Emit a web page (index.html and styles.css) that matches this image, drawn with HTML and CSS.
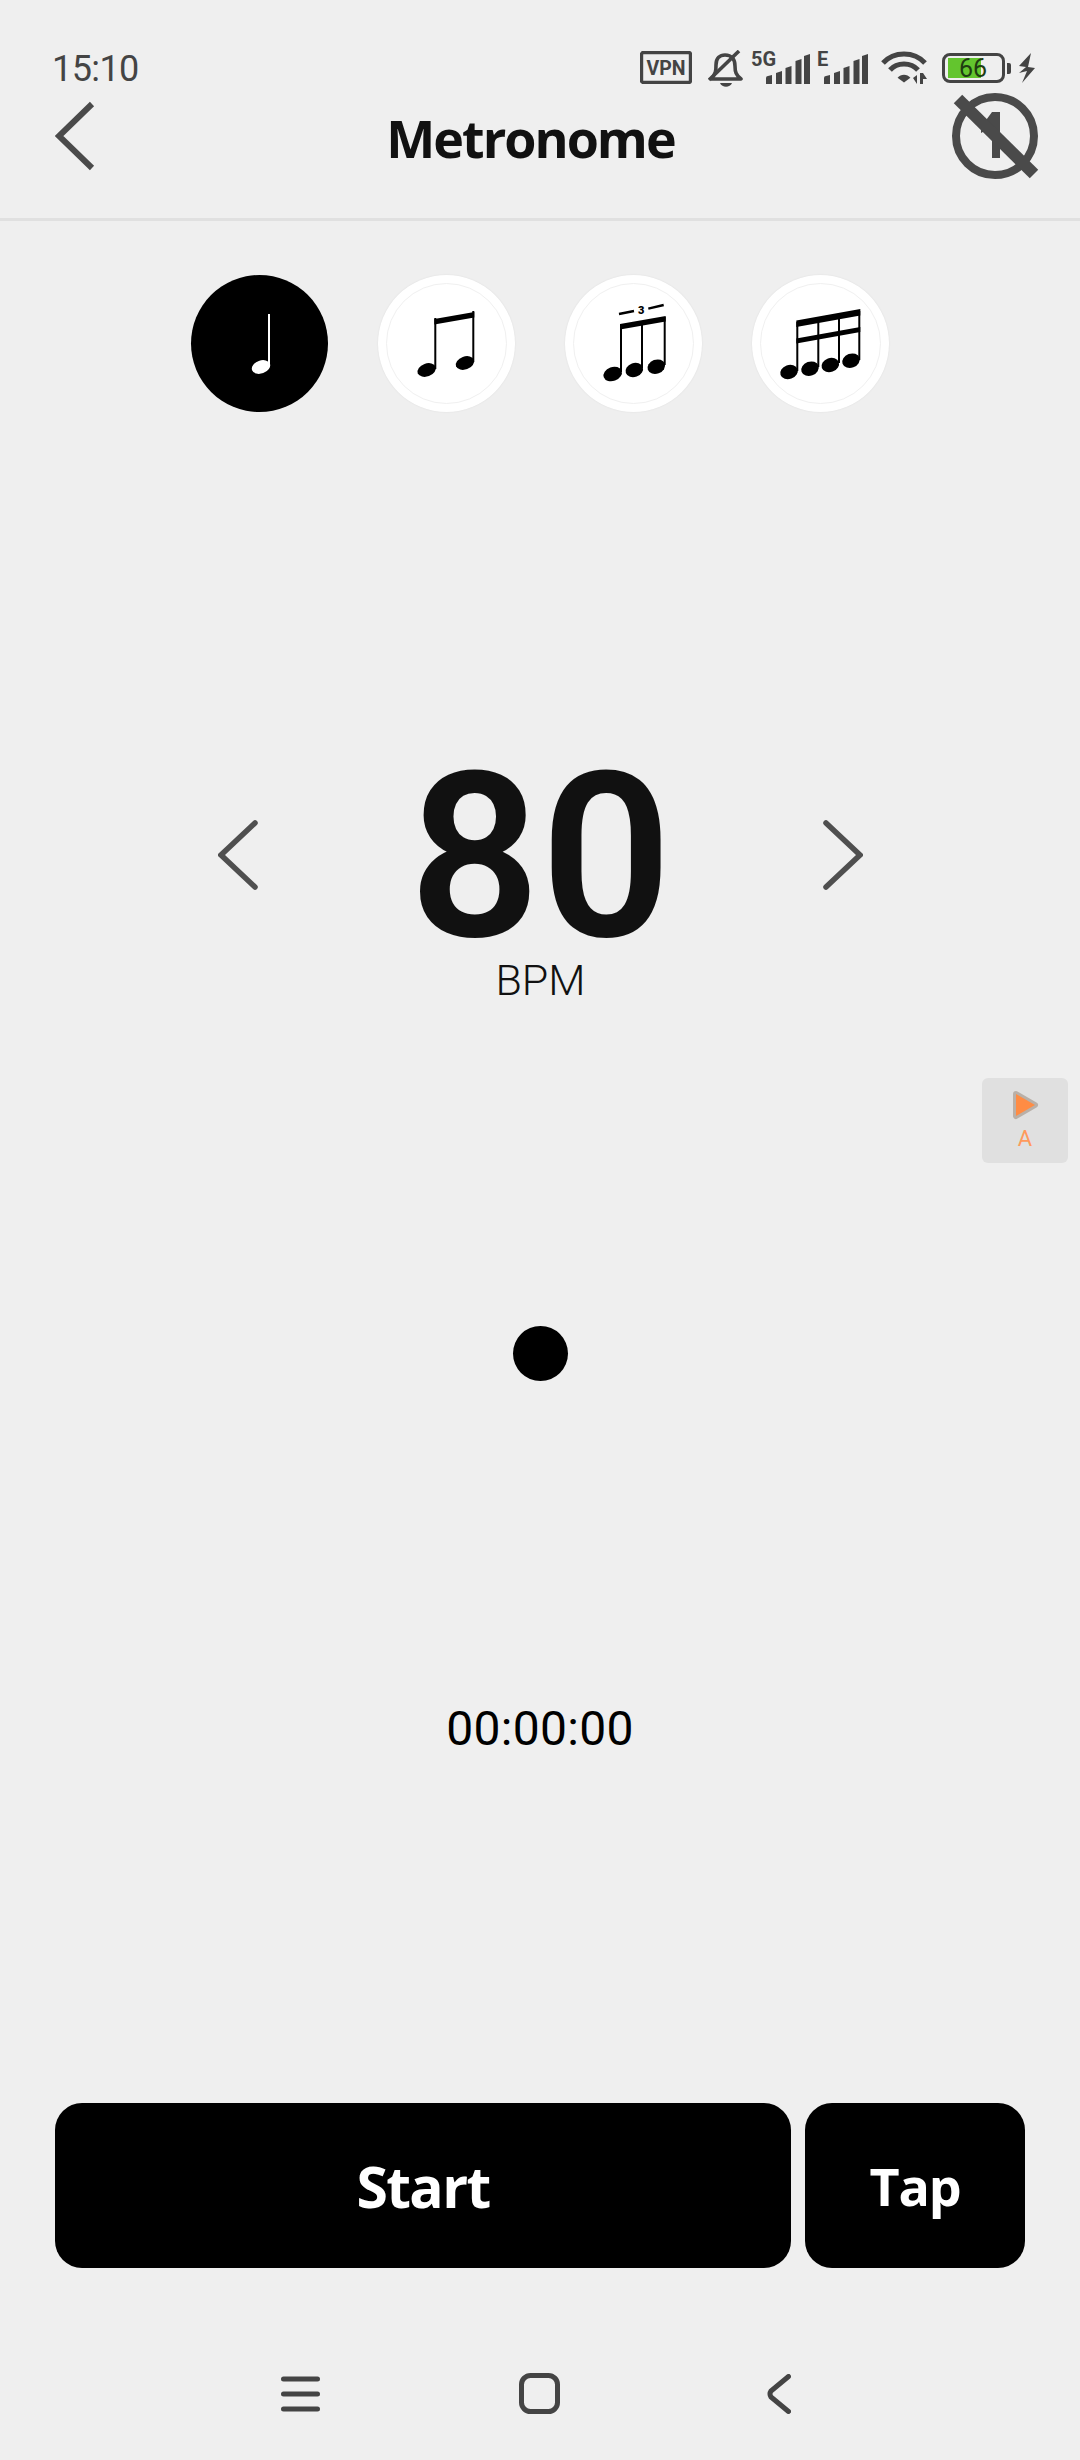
FILE: index.html
```html
<!DOCTYPE html>
<html lang="en">
<head>
  <meta charset="UTF-8">
  <title>Metronome</title>
  <link rel="stylesheet" href="styles.css">
</head>
<body>
  <div class="status">
    <span class="time">15:10</span>
    <div class="status-icons">
      <svg class="ic-vpn" width="52" height="33" viewBox="0 0 52 33">
        <rect x="1.5" y="1.5" width="49" height="30" rx="2" fill="none" stroke="#444" stroke-width="3.4"/>
        <text x="26" y="23.5" text-anchor="middle" class="st-text" font-size="19.5">VPN</text>
      </svg>
      <svg class="ic-bell" width="35" height="38" viewBox="0 0 35 38">
        <path d="M3 29 C8 24 8 20 8 15 C8 8 12 5 17 5 C24 5 27 10 27 16 C27 22 28 25 33 29 L3 29" fill="none" stroke="#444" stroke-width="3.6" stroke-linejoin="round"/>
        <path d="M1 30 L31 1" stroke="#444" stroke-width="3.6"/>
        <path d="M12 33 H24 C22 38 14 38 12 33 Z" fill="#444"/>
      </svg>
      <svg class="ic-signal" width="59" height="37" viewBox="0 -4 59 37">
        <text x="0" y="15" class="st-text" font-size="20">5G</text>
        <path d="M15 33 V27 Q15 25 17 25 L21 24 V33 Z M25 33 V22 L31 20 V33 Z M34.5 33 V17 L40.5 15 V33 Z M44.5 33 V10 L50.5 8 V33 Z M53 33 V5 L59 3 V33 Z" fill="#444"/>
      </svg>
      <svg class="ic-signal-e" width="51" height="37" viewBox="0 -4 51 37">
        <text x="0" y="15" class="st-text" font-size="20">E</text>
        <path d="M7 33 V27 Q7 25 9 25 L13 24 V33 Z M17 33 V22 L23 20 V33 Z M26.5 33 V17 L32.5 15 V33 Z M36.5 33 V10 L42.5 8 V33 Z M45 33 V5 L51 3 V33 Z" fill="#444"/>
      </svg>
      <svg class="ic-wifi" width="46" height="33" viewBox="0 0 46 33">
        <path d="M2 12 C13 0 33 0 44 12" fill="none" stroke="#444" stroke-width="5"/>
        <path d="M9 19 C16 11 30 11 37 19" fill="none" stroke="#444" stroke-width="5"/>
        <path d="M15 26 L23 32 L31 26 C27 21 19 21 15 26 Z" fill="#444" transform="translate(4.6 6) scale(.8)"/>
        <path d="M32 27 L36 24 V33 Z M39 22 H42 V33 H39 Z M42 22 L46 28 H42 Z" fill="#444"/>
      </svg>
      <div class="battery">
        <div class="battery-body">
          <div class="battery-fill"></div>
          <span class="battery-num">66</span>
        </div>
        <div class="battery-tip"></div>
      </div>
      <svg class="ic-bolt" width="18" height="30" viewBox="0 0 18 30">
        <path d="M13 0 L1 13 L8 14 L1 20 L9 18 L4 30 L17 15 L10 14 Z" fill="#444"/>
      </svg>
    </div>
  </div>

  <header class="topbar">
    <svg class="back" width="40" height="70" viewBox="0 0 40 70">
      <path d="M37 3 L4 35 L37 67" fill="none" stroke="#4a4a4a" stroke-width="6"/>
    </svg>
    <h1 class="title">Metronome</h1>
    <svg class="mute-one" width="90" height="90" viewBox="0 0 90 90">
      <circle cx="45" cy="45" r="39" fill="none" stroke="#4a4a4a" stroke-width="8"/>
      <path d="M42 21 H50 V67 H42 V36 L31 42 V36 Z" fill="#4a4a4a"/>
      <path d="M8 8 L84 83" stroke="#4a4a4a" stroke-width="12"/>
    </svg>
  </header>

  <div class="rhythm">
    <button class="note-btn active">
      <svg width="137" height="137" viewBox="0 0 137 137">
        <ellipse cx="70" cy="92" rx="9.5" ry="6.5" transform="rotate(-20 70 92)" fill="#fff"/>
        <path d="M78 39 V90" stroke="#fff" stroke-width="2"/>
      </svg>
    </button>
    <button class="note-btn">
      <svg width="137" height="137" viewBox="0 0 137 137">
        <ellipse cx="48.7" cy="95" rx="9.5" ry="6.5" transform="rotate(-20 48.7 95)"/>
        <ellipse cx="87" cy="88" rx="9.5" ry="6.5" transform="rotate(-20 87 88)"/>
        <path d="M57.3 43 V94 M95.3 36 V87" stroke="#000" stroke-width="2"/>
        <path d="M56.3 44 L96.3 37 V42.5 L56.3 49.5 Z"/>
      </svg>
    </button>
    <button class="note-btn">
      <svg width="137" height="137" viewBox="0 0 137 137">
        <ellipse cx="47.7" cy="99" rx="9.5" ry="7" transform="rotate(-20 47.7 99)"/>
        <ellipse cx="69.3" cy="95" rx="9" ry="7" transform="rotate(-20 69.3 95)"/>
        <ellipse cx="91.3" cy="91.7" rx="9" ry="7" transform="rotate(-20 91.3 91.7)"/>
        <path d="M56 50 V97 M77 46 V93 M99.7 42 V90" stroke="#000" stroke-width="2"/>
        <path d="M55 49 L100.7 41 V46.5 L55 54.5 Z"/>
        <path d="M54 39 L69 36 M83.3 33.7 L98.7 30" stroke="#000" stroke-width="2.4"/>
        <text x="76.3" y="39" text-anchor="middle" class="triplet">3</text>
      </svg>
    </button>
    <button class="note-btn">
      <svg width="137" height="137" viewBox="0 0 137 137">
        <ellipse cx="37" cy="97" rx="9" ry="7" transform="rotate(-20 37 97)"/>
        <ellipse cx="58" cy="93.7" rx="9" ry="7" transform="rotate(-20 58 93.7)"/>
        <ellipse cx="78.3" cy="90" rx="9" ry="7" transform="rotate(-20 78.3 90)"/>
        <ellipse cx="99" cy="85.7" rx="9" ry="7" transform="rotate(-20 99 85.7)"/>
        <path d="M45.3 47 V96 M66.3 43 V92 M87 40 V88 M107.3 36 V85" stroke="#000" stroke-width="2"/>
        <path d="M44.3 45.5 L108.3 34 V40.5 L44.3 52 Z"/>
        <path d="M44.3 63.5 L108.3 52 V57 L44.3 68.5 Z"/>
      </svg>
    </button>
  </div>

  <section class="tempo">
    <svg class="tempo-arrow" width="40" height="70" viewBox="0 0 40 70">
      <path d="M37 3 L3 35 L37 67" fill="none" stroke="#4f4f4f" stroke-width="5.5" stroke-linecap="round"/>
    </svg>
    <div class="tempo-value">
      <div class="bpm">80</div>
      <div class="bpm-unit">BPM</div>
    </div>
    <svg class="tempo-arrow" width="40" height="70" viewBox="0 0 40 70">
      <path d="M3 3 L37 35 L3 67" fill="none" stroke="#4f4f4f" stroke-width="5.5" stroke-linecap="round"/>
    </svg>
  </section>

  <div class="beat-dot"></div>
  <div class="timer">00:00:00</div>

  <div class="actions">
    <button class="btn btn-start">Start</button>
    <button class="btn btn-tap">Tap</button>
  </div>

  <nav class="navbar">
    <svg width="39" height="36" viewBox="0 0 39 36">
      <path d="M2.5 3 H36.5 M2.5 18 H36.5 M2.5 33 H36.5" stroke="#444" stroke-width="5" stroke-linecap="round"/>
    </svg>
    <svg width="41" height="41" viewBox="0 0 41 41">
      <rect x="2.5" y="2.5" width="36" height="36" rx="9" fill="none" stroke="#444" stroke-width="5"/>
    </svg>
    <svg class="nav-back" width="24" height="40" viewBox="0 0 24 40">
      <path d="M21.5 2.5 L4 17 Q2 20 4 23 L21.5 37.5" fill="none" stroke="#444" stroke-width="5" stroke-linecap="round"/>
    </svg>
  </nav>

  <div class="float-tool">
    <svg width="28" height="32" viewBox="0 0 28 32">
      <path d="M5 5 L24 16 L5 27 Z" fill="#ff8c44" stroke="#b9b0a8" stroke-width="6" stroke-linejoin="round" paint-order="stroke"/>
    </svg>
    <span class="float-label">A</span>
  </div>
</body>
</html>
```

FILE: styles.css
```css
body {
  position: relative;
  width: 1080px;
  height: 2460px;
  margin: 0;
  overflow: hidden;
  background: #efefef;
  font-family: Roboto, sans-serif;
  color: #111;
}
button {
  border: 0;
  padding: 0;
  font-family: inherit;
}
svg {
  display: block;
}

.status {
  display: flex;
  justify-content: space-between;
  height: 92px;
  box-sizing: border-box;
  padding: 50px 44px 0 52px;
}
.time {
  font-size: 36px;
  line-height: 38px;
  letter-spacing: -0.6px;
  color: #444;
}
.status-icons {
  display: flex;
  align-items: flex-start;
  height: 38px;
  margin-top: 1px;
}
.st-text {
  font-family: Roboto, sans-serif;
  font-weight: 700;
  fill: #444;
}
.ic-bell { margin-left: 16px; margin-top: -1px; }
.ic-signal { margin-left: 8px; margin-top: -4px; }
.ic-signal-e { margin-left: 7px; margin-top: -4px; }
.ic-wifi { margin-left: 13px; }
.battery {
  display: flex;
  align-items: center;
  margin-left: 15px;
  margin-top: 2px;
}
.battery-body {
  position: relative;
  box-sizing: border-box;
  width: 63px;
  height: 30px;
  border: 3px solid #444;
  border-radius: 8px;
}
.battery-fill {
  width: 33px;
  height: 20px;
  margin: 2px 0 0 3px;
  background: #63c52e;
}
.battery-num {
  position: absolute;
  top: 0;
  left: 14px;
  font-size: 25px;
  line-height: 25px;
  color: #1f3d12;
}
.battery-tip {
  width: 4px;
  height: 11px;
  margin-left: 2px;
  border-radius: 0 2px 2px 0;
  background: #444;
}
.ic-bolt { margin-left: 7px; margin-top: 2px; }

.topbar {
  display: flex;
  align-items: center;
  height: 126px;
  padding: 0 40px 0 55px;
  border-bottom: 3px solid #e0e0e0;
}
.back {
  margin-top: -38px;
}
.title {
  flex: 1;
  margin: -36px 0 0;
  padding-left: 16px;
  font-family: "Open Sans", sans-serif;
  font-size: 52px;
  font-weight: 700;
  letter-spacing: -2px;
  text-align: center;
  color: #111;
}
.mute-one {
  margin-top: -38px;
}

.rhythm {
  display: flex;
  justify-content: center;
  gap: 50px;
  margin-top: 54px;
}
.note-btn {
  position: relative;
  width: 137px;
  height: 137px;
  border-radius: 50%;
  background: #fff;
  box-shadow: 0 0 2px rgba(0, 0, 0, 0.08);
}
.note-btn::after {
  content: "";
  position: absolute;
  inset: 8px;
  border: 1px solid #f0f0f0;
  border-radius: 50%;
}
.note-btn.active {
  background: #000;
  box-shadow: none;
}
.note-btn.active::after {
  display: none;
}
.triplet {
  font-family: Roboto, sans-serif;
  font-size: 11px;
  font-weight: 900;
}

.tempo {
  display: flex;
  justify-content: space-between;
  align-items: flex-start;
  width: 645px;
  margin: 356px 0 0 218px;
}
.tempo-arrow {
  margin-top: 52px;
}
.tempo-value {
  text-align: center;
}
.bpm {
  font-size: 230px;
  font-weight: 600;
  line-height: 180px;
  color: #111;
}
.bpm-unit {
  margin-top: 9px;
  font-size: 43px;
  font-weight: 300;
  line-height: 46px;
  color: #111;
}

.beat-dot {
  width: 55px;
  height: 55px;
  margin: 323px auto 0;
  border-radius: 50%;
  background: #000;
}
.timer {
  margin-top: 321px;
  font-size: 48px;
  line-height: 54px;
  letter-spacing: 0.3px;
  text-align: center;
  color: #000;
}

.actions {
  display: flex;
  gap: 14px;
  margin: 347px 55px 0;
}
.btn {
  height: 165px;
  border-radius: 27px;
  background: #000;
  color: #fff;
  font-family: "Open Sans", sans-serif;
  font-weight: 700;
  font-size: 57px;
  letter-spacing: -1.6px;
}
.btn-start {
  flex: 1;
}
.btn-tap {
  width: 220px;
  font-size: 52px;
  letter-spacing: -1.2px;
}

.navbar {
  display: flex;
  align-items: center;
  gap: 199px;
  margin: 105px 0 0 281px;
}
.nav-back {
  margin-left: 8px;
}

.float-tool {
  position: absolute;
  top: 1078px;
  left: 982px;
  display: flex;
  flex-direction: column;
  align-items: center;
  box-sizing: border-box;
  width: 86px;
  height: 85px;
  padding-top: 11px;
  border-radius: 6px;
  background: #e0e0e0;
}
.float-label {
  margin-top: 6px;
  font-size: 22px;
  line-height: 24px;
  color: #ff9a5c;
}
```
